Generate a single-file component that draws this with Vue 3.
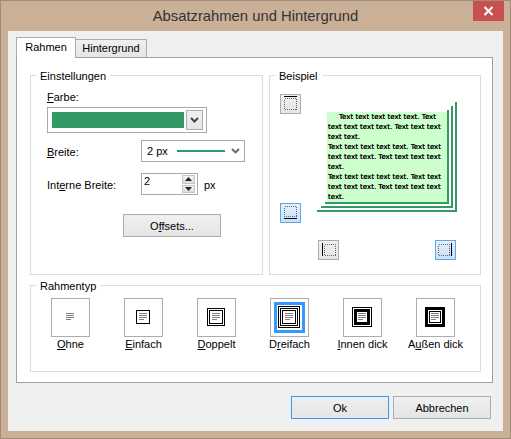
<script setup>
const tabs = [
  { label: 'Rahmen', active: true },
  { label: 'Hintergrund', active: false },
]
const sampleLines = [
  { text: 'Text text text text text. Text', first: true },
  { text: 'text text text text. Text text text' },
  { text: 'text text.' },
  { text: 'Text text text text text. Text text' },
  { text: 'text text text. Text text text text' },
  { text: 'text.' },
  { text: 'Text text text text text. Text text' },
  { text: 'text text text. Text text text text' },
  { text: 'text.' },
]
const frame = (at, size, t) => ({ x: at + t / 2, y: at + t / 2, w: size - t, h: size - t, t })
const types = [
  { pre: '', key: 'O', post: 'hne', rects: [] },
  { pre: '', key: 'E', post: 'infach', rects: [frame(11, 14, 1)] },
  { pre: '', key: 'D', post: 'oppelt', rects: [frame(9, 18, 1), frame(11, 14, 1)] },
  { pre: 'D', key: 'r', post: 'eifach', selected: true, rects: [frame(7, 22, 1), frame(9, 18, 1), frame(11, 14, 1)] },
  { pre: '', key: 'I', post: 'nnen dick', rects: [frame(8, 20, 1), frame(10, 16, 3)] },
  { pre: 'A', key: 'u', post: 'ßen dick', rects: [frame(8, 20, 3), frame(12, 12, 1)] },
]
</script>

<template>
  <div class="window">
    <header class="titlebar">
      <span class="title">Absatzrahmen und Hintergrund</span>
      <button class="close" aria-label="Schließen">
        <svg width="11" height="10" viewBox="0 0 11 10"><path d="M1.5 1 L9.5 9 M9.5 1 L1.5 9" stroke="#fff" stroke-width="2" fill="none"/></svg>
      </button>
    </header>
    <main class="client">
      <div class="tabs">
        <div v-for="t in tabs" :key="t.label" class="tab" :class="{ active: t.active }">{{ t.label }}</div>
      </div>
      <section class="panel">
        <div class="top-row">
          <div class="group settings">
            <span class="legend">Einstellungen</span>
            <div class="label"><u>F</u>arbe:</div>
            <div class="color-combo">
              <div class="swatch"></div>
              <div class="combo-btn">
                <svg width="9" height="6" viewBox="0 0 9 6"><path d="M1 1 L4.5 4.5 L8 1" stroke="#444" stroke-width="2" fill="none"/></svg>
              </div>
            </div>
            <div class="row breite">
              <span class="row-label"><u>B</u>reite:</span>
              <div class="width-combo">
                <span>2 px</span>
                <span class="width-line"></span>
                <svg width="9" height="6" viewBox="0 0 9 6"><path d="M1 1 L4.5 4.5 L8 1" stroke="#666" stroke-width="1.8" fill="none"/></svg>
              </div>
            </div>
            <div class="row interne">
              <span class="row-label">Int<u>e</u>rne Breite:</span>
              <div class="spin">
                <span class="spin-value">2</span>
                <div class="spin-btns">
                  <div class="spin-btn"><svg width="7" height="4" viewBox="0 0 7 4"><path d="M3.5 0 L7 4 L0 4 Z" fill="#222"/></svg></div>
                  <div class="spin-btn"><svg width="7" height="4" viewBox="0 0 7 4"><path d="M0 0 L7 0 L3.5 4 Z" fill="#222"/></svg></div>
                </div>
              </div>
              <span class="unit">px</span>
            </div>
            <button class="btn offsets">O<u>f</u>fsets...</button>
          </div>

          <div class="group sample">
            <span class="legend">Beispiel</span>
            <div class="sample-grid">
              <div class="side-btns">
                <div class="edge"><svg width="21" height="20" viewBox="0 0 21 20" shape-rendering="crispEdges"><rect x="4.5" y="4.5" width="12" height="11" fill="none" stroke="#666" stroke-dasharray="1 1"/><path d="M4 2.5 H17" stroke="#000"/></svg></div>
                <div class="edge on"><svg width="21" height="20" viewBox="0 0 21 20" shape-rendering="crispEdges"><rect x="4.5" y="3.5" width="12" height="10" fill="none" stroke="#666" stroke-dasharray="1 1"/><path d="M4 15.5 H17" stroke="#000"/></svg></div>
              </div>
              <div class="lines">
                <div class="line-b">
                  <div class="line-c">
                    <div class="paper">
                      <div v-for="(l, i) in sampleLines" :key="i" class="text-line" :class="{ first: l.first }">{{ l.text }}</div>
                    </div>
                  </div>
                </div>
              </div>
              <div class="bottom-btns">
                <div class="edge"><svg width="21" height="20" viewBox="0 0 21 20" shape-rendering="crispEdges"><rect x="6.5" y="4.5" width="11" height="11" fill="none" stroke="#666" stroke-dasharray="1 1"/><path d="M4.5 3 V16" stroke="#000"/></svg></div>
                <div class="edge on"><svg width="21" height="20" viewBox="0 0 21 20" shape-rendering="crispEdges"><rect x="3.5" y="4.5" width="11" height="11" fill="none" stroke="#666" stroke-dasharray="1 1"/><path d="M16.5 3 V16" stroke="#000"/></svg></div>
              </div>
            </div>
          </div>
        </div>

        <div class="group types">
          <span class="legend">Rahmentyp</span>
          <div class="type-row">
            <div v-for="t in types" :key="t.key + t.post" class="type">
              <div class="type-btn">
                <svg width="37" height="37" viewBox="0 0 37 37">
                  <rect v-if="t.selected" x="4.5" y="4.5" width="28" height="28" fill="none" stroke="#3399ff" stroke-width="3"/>
                  <rect v-for="(r, i) in t.rects" :key="i" :x="r.x" :y="r.y" :width="r.w" :height="r.h" fill="none" stroke="#000" :stroke-width="r.t"/>
                  <path d="M14 14.5 H22 M14 16.5 H22 M14 18.5 H22 M14 20.5 H19" stroke="#808080" fill="none"/>
                </svg>
              </div>
              <span class="type-label">{{ t.pre }}<u>{{ t.key }}</u>{{ t.post }}</span>
            </div>
          </div>
        </div>
      </section>
      <footer class="footer">
        <button class="btn default">Ok</button>
        <button class="btn">Abbrechen</button>
      </footer>
    </main>
  </div>
</template>

<style>
html, body { margin: 0; padding: 0; background: #c9b097; }
</style>

<style scoped>
.window {
  width: 511px;
  height: 439px;
  box-sizing: border-box;
  background: #c9b097;
  border: 1px solid #a08c78;
  position: relative;
  font-family: "Liberation Sans", Arial, sans-serif;
  font-size: 11px;
  color: #000;
  overflow: hidden;
}
.titlebar {
  height: 30px;
  display: flex;
  align-items: center;
  justify-content: center;
}
.title {
  font-size: 14.8px;
  color: #333;
}
.close {
  position: absolute;
  top: 0;
  right: 6px;
  width: 31px;
  height: 20px;
  padding: 0;
  border: 0;
  background: #c75050;
  display: flex;
  align-items: center;
  justify-content: center;
}
.client {
  margin: 0 7px;
  height: 400px;
  background: #f0f0f0;
  box-sizing: border-box;
  padding: 6px 11px 0 8px;
}
.tabs {
  display: flex;
  align-items: flex-end;
  height: 20px;
  position: relative;
  z-index: 1;
}
.tab {
  box-sizing: border-box;
  height: 18px;
  line-height: 16px;
  border: 1px solid #acacac;
  border-left: 0;
  border-bottom: 0;
  background: linear-gradient(#f0f0f0, #e5e5e5);
  width: 71px;
  text-align: center;
}
.tab.active {
  height: 21px;
  width: 60px;
  margin-bottom: -1px;
  border-left: 1px solid #acacac;
  background: #fff;
  line-height: 18px;
}
.panel {
  box-sizing: border-box;
  width: 477px;
  height: 326px;
  background: #fff;
  border: 1px solid #a0a0a0;
  padding: 17px 0 0 13px;
}
.top-row {
  display: flex;
  gap: 6px;
}
.group {
  box-sizing: border-box;
  border: 1px solid #dcdcdc;
  position: relative;
}
.legend {
  position: absolute;
  top: -8px;
  left: 5px;
  padding: 0 4px;
  background: #fff;
  line-height: 16px;
}
.settings {
  width: 233px;
  height: 200px;
  padding: 13px 0 0 16px;
}
.label { line-height: 16px; height: 16px; }
.color-combo {
  box-sizing: border-box;
  margin-top: 2px;
  width: 160px;
  height: 26px;
  border: 1px solid #a9a9a9;
  padding: 2px 3px 2px 4px;
  display: flex;
  align-items: center;
  gap: 2px;
}
.swatch { width: 133px; height: 16px; background: #339966; }
.combo-btn {
  box-sizing: border-box;
  width: 17px;
  height: 20px;
  border: 1px solid #acacac;
  background: linear-gradient(#f0f0f0, #e5e5e5);
  display: flex;
  align-items: center;
  justify-content: center;
}
.row { display: flex; align-items: center; height: 22px; }
.breite { margin-top: 7px; }
.interne { margin-top: 11px; }
.row-label { width: 94px; flex: none; padding-top: 2px; }
.width-combo {
  box-sizing: border-box;
  width: 104px;
  height: 22px;
  border: 1px solid #a9a9a9;
  padding: 0 4px 0 5px;
  display: flex;
  align-items: center;
}
.width-line { width: 48px; height: 2px; background: #339966; margin: 0 auto 0 9px; }
.spin {
  box-sizing: border-box;
  width: 57px;
  height: 22px;
  border: 1px solid #a9a9a9;
  padding: 1px 2px;
  display: flex;
  justify-content: space-between;
}
.spin-value { line-height: 13px; }
.spin-btns { display: flex; flex-direction: column; gap: 1px; width: 13px; }
.spin-btn {
  flex: 1;
  background: linear-gradient(#f2f2f2, #dcdcdc);
  border: 1px solid #c4c4c4;
  display: flex;
  align-items: center;
  justify-content: center;
}
.unit { margin-left: 6px; padding-top: 2px; }
.btn {
  box-sizing: border-box;
  width: 98px;
  height: 23px;
  padding: 0;
  border: 1px solid #acacac;
  background: linear-gradient(#f0f0f0, #e5e5e5);
  font: inherit;
  color: #000;
}
.offsets { display: block; margin: 19px 0 0 76px; }
.sample {
  width: 212px;
  height: 200px;
  padding: 18px 0 0 10px;
}
.sample-grid {
  display: grid;
  grid-template-columns: 21px 140px;
  column-gap: 16px;
}
.side-btns {
  grid-row: 1 / 3;
  height: 129px;
  display: flex;
  flex-direction: column;
  justify-content: space-between;
}
.edge {
  box-sizing: border-box;
  width: 21px;
  height: 20px;
  background: linear-gradient(#f0f0f0, #e5e5e5);
  outline: 1px solid #acacac;
  outline-offset: -1px;
  line-height: 0;
}
.edge.on {
  background: linear-gradient(#e4f1fd, #c4dffa);
  outline-color: #5fa5ea;
}
.lines {
  margin-top: 8px;
  box-sizing: border-box;
  width: 140px;
  height: 110px;
  padding: 4px 0 0 4px;
  border-right: 2px solid #339966;
  border-bottom: 2px solid #339966;
}
.line-b {
  box-sizing: border-box;
  height: 102px;
  padding: 4px 0 0 4px;
  margin-right: 2px;
  border-right: 2px solid #339966;
  border-bottom: 2px solid #339966;
}
.line-c {
  box-sizing: border-box;
  height: 94px;
  padding: 2px 0 0 2px;
  margin-right: 2px;
  border-right: 2px solid #339966;
  border-bottom: 2px solid #339966;
}
.paper {
  height: 90px;
  background: #ccffcc;
  font-family: "DejaVu Sans", sans-serif;
  font-size: 7px;
  line-height: 10px;
  text-shadow: 0 0 0.4px #000;
  overflow: hidden;
}
.text-line { white-space: nowrap; padding-left: 1px; }
.text-line.first { text-align: center; }
.bottom-btns {
  grid-column: 2;
  margin-top: 28px;
  padding: 0 1px;
  display: flex;
  justify-content: space-between;
}
.types {
  width: 451px;
  height: 87px;
  margin-top: 10px;
  padding: 12px 0 0 3px;
}
.type-row { display: flex; }
.type {
  width: 73px;
  display: flex;
  flex-direction: column;
  align-items: center;
}
.type-btn {
  box-sizing: border-box;
  width: 39px;
  height: 39px;
  border: 1px solid #adadad;
  line-height: 0;
}
.type-label { line-height: 14px; white-space: nowrap; }
.footer {
  display: flex;
  gap: 4px;
  justify-content: flex-end;
  margin-top: 13px;
  padding-right: 1px;
}
.btn.default { border-color: #3399ff; }
</style>
